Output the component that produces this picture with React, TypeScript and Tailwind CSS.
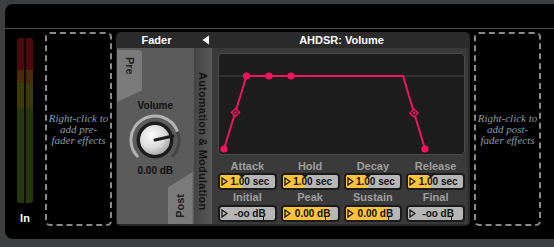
import React from "react";

const ui = "font-['Liberation_Sans',Arial,sans-serif]";
const serif = "font-['Liberation_Serif','Times_New_Roman',serif]";

const row1 = [
  { label: "Attack", text: "1.00 sec", fill: 41 },
  { label: "Hold", text: "1.00 sec", fill: 41 },
  { label: "Decay", text: "1.00 sec", fill: 41 },
  { label: "Release", text: "1.00 sec", fill: 41 },
];

const row2 = [
  { label: "Initial", text: "-oo dB", fill: 0 },
  { label: "Peak", text: "0.00 dB", fill: 87 },
  { label: "Sustain", text: "0.00 dB", fill: 78 },
  { label: "Final", text: "-oo dB", fill: 0 },
];

const Tri = () => (
  <svg width="7" height="9" viewBox="0 0 7 9" className="shrink-0">
    <polygon points="1,1 6,4.5 1,8" fill="none" stroke="#151515" strokeWidth="1.3" />
  </svg>
);

type BoxProps = { text: string; fill: number; notch?: boolean; tick?: number };

const ValueBox = ({ text, fill, notch, tick }: BoxProps) => (
  <div className="relative h-[17px] rounded-[4px] border-2 border-[#1b1b1b] bg-[#b6b6b6] overflow-hidden">
    <div className="absolute left-0 top-0 bottom-0 bg-[#fcc33b]" style={{ width: `${fill}%` }} />
    {notch && (
      <div
        className="absolute top-0 w-0 h-0 border-l-[3px] border-r-[3px] border-t-[3px] border-l-transparent border-r-transparent border-t-[#1b1b1b] -translate-x-1/2"
        style={{ left: `${fill}%` }}
      />
    )}
    {tick !== undefined && (
      <div className="absolute bottom-0 w-[1px] h-[3px] bg-[#1b1b1b]" style={{ left: `${tick}%` }} />
    )}
    <div className="relative h-full flex items-center pl-[1px]">
      <Tri />
      <span className="flex-1 text-center text-[10px] font-bold leading-none text-[#111] pr-[3px]">{text}</span>
    </div>
  </div>
);

const Knob = () => (
  <svg width="52" height="52" viewBox="0 0 52 52">
    <defs>
      <radialGradient id="face" cx="0.38" cy="0.35" r="0.75">
        <stop offset="0" stopColor="#fbfbfb" />
        <stop offset="0.55" stopColor="#dcdcdc" />
        <stop offset="1" stopColor="#9a9a9a" />
      </radialGradient>
    </defs>
    <path d="M 9.03 42.97 A 24 24 0 1 1 48.55 17.79" fill="none" stroke="#b3b3b3" strokeWidth="3" />
    <path d="M 48.55 17.79 A 24 24 0 0 1 42.97 42.97" fill="none" stroke="#454545" strokeWidth="3" />
    <circle cx="26" cy="26" r="18.5" fill="#1c1c1c" />
    <circle cx="26" cy="26" r="15" fill="url(#face)" />
    <line x1="26" y1="26" x2="44" y2="22" stroke="#1c1c1c" strokeWidth="3" strokeLinecap="round" />
  </svg>
);

const Graph = () => {
  const pink = "#f2145c";
  return (
    <svg width="245" height="101" viewBox="0 0 245 101" className="block">
      <line x1="0" y1="22" x2="245" y2="22" stroke="#383838" strokeWidth="1.5" />
      <polyline
        points="5,95 27.5,22 184,22 206,95"
        fill="none"
        stroke={pink}
        strokeWidth="2"
        strokeLinejoin="round"
      />
      {[
        [5, 95],
        [27.5, 22],
        [50, 22],
        [72, 22],
        [206, 95],
      ].map(([x, y], i) => (
        <circle key={i} cx={x} cy={y} r="3.6" fill={pink} />
      ))}
      {[
        [16.5, 58.5],
        [195, 59],
      ].map(([x, y], i) => (
        <g key={i}>
          <polygon
            points={`${x},${y - 4} ${x + 4},${y} ${x},${y + 4} ${x - 4},${y}`}
            fill="#1d1d1d"
            stroke={pink}
            strokeWidth="1.5"
          />
          <circle cx={x} cy={y} r="1.2" fill={pink} />
        </g>
      ))}
    </svg>
  );
};

const DropZone = ({ lines }: { lines: string[] }) => (
  <div className="w-[67px] h-[194px] rounded-[5px] border-2 border-dashed border-[#8a8a8a] flex flex-col items-center justify-center">
    {lines.map((l) => (
      <div key={l} className={`${serif} italic text-[11px] leading-[11px] text-[#8d9dad] whitespace-nowrap`}>
        {l}
      </div>
    ))}
  </div>
);

export default function App() {
  return (
    <div className={`${ui} w-[554px] h-[247px] bg-[#3c3f3f] pl-[5px] pt-[4px] pb-[8px] overflow-hidden`}>
      <div className="h-full bg-black rounded-l-[8px] flex flex-col">
        <div className="h-[25px] border-b border-[#4b4b4b] shrink-0" />
        <div className="flex-1 flex pt-[3px]">
          {/* input meter */}
          <div className="w-[40px] flex flex-col items-center pt-[6px]">
            <div className="w-[16px] h-[165px] rounded-[3px] overflow-hidden bg-[#120804] flex gap-[2px]">
              {[0, 1].map((i) => (
                <div key={i} className="flex-1 flex flex-col">
                  <div className="h-[32px] bg-[#4c0a0e]" />
                  <div className="h-[13px] bg-[#4a2a08]" />
                  <div className="h-[25px] bg-[#3b3b08]" />
                  <div className="flex-1 bg-[#213a08]" />
                </div>
              ))}
            </div>
            <div className="mt-[9px] text-[11px] font-bold leading-[12px] text-white">In</div>
          </div>

          <DropZone lines={["Right-click to", "add pre-", "fader effects"]} />

          {/* main panel */}
          <div className="ml-[4px] mr-[4px] w-[354px] h-[194px] rounded-[5px] bg-[#2a2a2a] flex flex-col pl-[1px] pr-[2px] pb-[2px]">
            <div className="h-[16px] flex items-center shrink-0">
              <div className="w-[79px] text-center text-[11px] font-bold text-white leading-none">Fader</div>
              <div className="w-[19px] flex justify-center">
                <svg width="8" height="10" viewBox="0 0 8 10">
                  <polygon points="7,0.5 7,9.5 0.5,5" fill="#fff" />
                </svg>
              </div>
              <div className="flex-1 text-center text-[11px] font-bold text-white leading-none">AHDSR: Volume</div>
            </div>

            <div className="flex-1 flex">
              {/* fader */}
              <div className="relative w-[79px] bg-[#5b5b5b] flex flex-col items-center pt-[51px]">
                <div className="absolute left-0 top-[2px] w-[25px] h-[52px] bg-[#7a7a7a] rounded-tr-[4px] [clip-path:polygon(0_0,100%_0,100%_78%,0_100%)] flex justify-center pt-[7px]">
                  <span className="[writing-mode:vertical-rl] text-[11px] font-bold text-[#222] leading-none">Pre</span>
                </div>
                <div className="absolute right-[1px] bottom-0 w-[25px] h-[52px] bg-[#7a7a7a] [clip-path:polygon(0_30%,100%_0,100%_100%,0_100%)] flex justify-center items-end pb-[6px]">
                  <span className="[writing-mode:vertical-rl] rotate-180 text-[11px] font-bold text-[#222] leading-none">Post</span>
                </div>
                <div className="text-[10px] font-bold leading-[13px] text-[#111]">Volume</div>
                <div className="mt-[2px]">
                  <Knob />
                </div>
                <div className="-mt-[2px] text-[10px] font-bold leading-[13px] text-[#111]">0.00 dB</div>
              </div>

              {/* automation strip */}
              <div className="w-[19px] bg-gradient-to-r from-[#444] to-[#585858] flex justify-center pt-[24px]">
                <span className="[writing-mode:vertical-rl] text-[11px] font-bold tracking-[0.2px] text-[#151515] leading-none">
                  Automation &amp; Modulation
                </span>
              </div>

              {/* ahdsr */}
              <div className="flex-1 bg-[#3a3a3a] pl-[6px] pr-[3px] pt-[5px] flex flex-col">
                <div className="h-[102px] rounded-[4px] border border-[#4a4a4a] bg-[#1d1d1d] overflow-hidden">
                  <Graph />
                </div>
                <div className="grid grid-cols-4 gap-x-[4px] mt-[4px]">
                  {row1.map((c) => (
                    <div key={c.label} className="text-center text-[11px] font-bold leading-[14px] text-[#9e9e9e]">
                      {c.label}
                    </div>
                  ))}
                  {row1.map((c) => (
                    <ValueBox key={c.label} text={c.text} fill={c.fill} notch />
                  ))}
                  {row2.map((c) => (
                    <div key={c.label} className="text-center text-[11px] font-bold leading-[15px] text-[#9e9e9e]">
                      {c.label}
                    </div>
                  ))}
                  {row2.map((c) => (
                    <ValueBox key={c.label} text={c.text} fill={c.fill} tick={78} />
                  ))}
                </div>
              </div>
            </div>
          </div>

          <DropZone lines={["Right-click to", "add post-", "fader effects"]} />
        </div>
      </div>
    </div>
  );
}
